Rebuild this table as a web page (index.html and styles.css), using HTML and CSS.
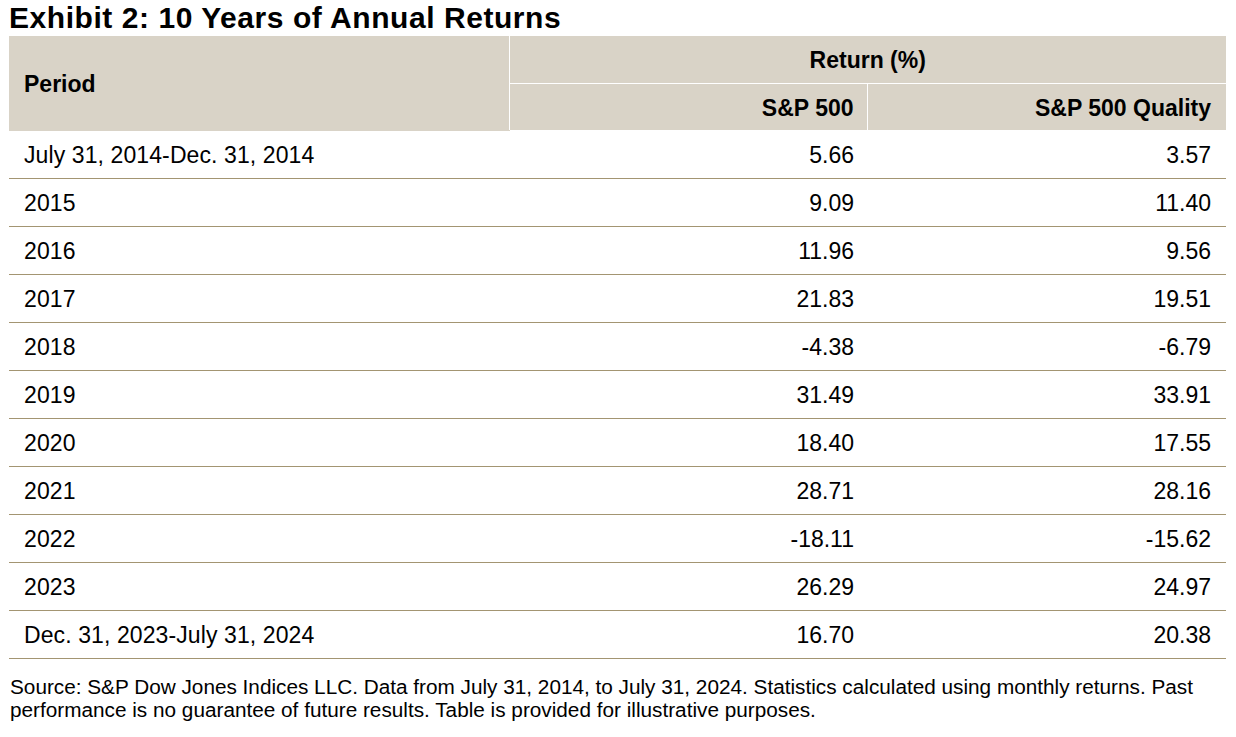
FILE: index.html
```html
<!DOCTYPE html>
<html>
<head>
<meta charset="utf-8">
<link rel="stylesheet" href="styles.css">
</head>
<body>
<div class="exhibit">
  <h1 class="title">Exhibit 2: 10 Years of Annual Returns</h1>
  <table class="returns">
    <colgroup>
      <col class="c-period">
      <col class="c-sp">
      <col class="c-q">
    </colgroup>
    <thead>
      <tr>
        <th class="h-period" rowspan="2">Period</th>
        <th class="h-group" colspan="2">Return (%)</th>
      </tr>
      <tr>
        <th class="h-num">S&amp;P 500</th>
        <th class="h-num h-last">S&amp;P 500 Quality</th>
      </tr>
    </thead>
    <tbody>
      <tr><td>July 31, 2014-Dec. 31, 2014</td><td class="n">5.66</td><td class="n last">3.57</td></tr>
      <tr><td>2015</td><td class="n">9.09</td><td class="n last">11.40</td></tr>
      <tr><td>2016</td><td class="n">11.96</td><td class="n last">9.56</td></tr>
      <tr><td>2017</td><td class="n">21.83</td><td class="n last">19.51</td></tr>
      <tr><td>2018</td><td class="n">-4.38</td><td class="n last">-6.79</td></tr>
      <tr><td>2019</td><td class="n">31.49</td><td class="n last">33.91</td></tr>
      <tr><td>2020</td><td class="n">18.40</td><td class="n last">17.55</td></tr>
      <tr><td>2021</td><td class="n">28.71</td><td class="n last">28.16</td></tr>
      <tr><td>2022</td><td class="n">-18.11</td><td class="n last">-15.62</td></tr>
      <tr><td>2023</td><td class="n">26.29</td><td class="n last">24.97</td></tr>
      <tr><td>Dec. 31, 2023-July 31, 2024</td><td class="n">16.70</td><td class="n last">20.38</td></tr>
    </tbody>
  </table>
  <p class="source">Source: S&amp;P Dow Jones Indices LLC. Data from July 31, 2014, to July 31, 2024. Statistics calculated using monthly returns. Past performance is no guarantee of future results. Table is provided for illustrative purposes.</p>
</div>
</body>
</html>
```

FILE: styles.css
```css
html, body {
  margin: 0;
  padding: 0;
  background: #ffffff;
}
body {
  font-family: "Liberation Sans", Arial, sans-serif;
  color: #000000;
}
.exhibit {
  padding: 0 10px 0 9px;
  width: 1217px;
}
.title {
  margin: 0;
  padding: 0;
  font-size: 30px;
  letter-spacing: 0.55px;
  font-weight: bold;
  line-height: 36px;
  height: 36px;
  white-space: nowrap;
}
.returns {
  width: 1217px;
  border-collapse: collapse;
  table-layout: fixed;
}
.c-period { width: 500px; }
.c-sp { width: 358px; }
.c-q { width: 359px; }
.returns th {
  background: #d9d3c7;
  font-weight: bold;
  font-size: 23px;
  height: 47px;
  padding: 3px 0 0 0;
  box-sizing: border-box;
}
.h-period {
  text-align: left;
  padding-left: 15px !important;
  border-right: 1px solid #ffffff;
  border-bottom: 1px solid #d9d3c7;
}
.h-group {
  text-align: center;
  border-bottom: 1px solid #ffffff;
}
.h-num {
  text-align: right;
  padding-right: 13px !important;
}
.h-num:first-child {
  border-right: 1px solid #ffffff;
}
.h-last {
  padding-right: 15px !important;
}
.returns td {
  font-size: 23px;
  height: 48px;
  padding: 3px 0 0 15px;
  box-sizing: border-box;
  border-bottom: 1px solid #a39572;
  letter-spacing: 0.1px;
}
.returns td.n {
  text-align: right;
  padding: 3px 13px 0 0;
  letter-spacing: 0;
}
.returns td.last {
  padding-right: 15px;
}
.source {
  margin: 16px 0 0 1px;
  font-size: 20.75px;
  line-height: 23px;
  width: 1212px;
}
```
